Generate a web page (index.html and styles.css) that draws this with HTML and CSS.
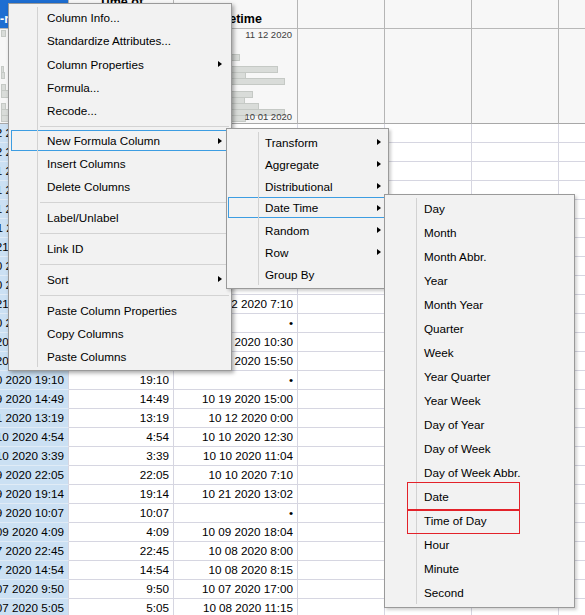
FILE: index.html
```html
<!DOCTYPE html>
<html>
<head>
<meta charset="utf-8">
<link rel="stylesheet" href="styles.css">
</head>
<body>
<div class="table">
  <div class="row">
    <div class="h c1 sel"><span class="clipname">Date-received</span></div>
    <div class="h c2"><span>Time of</span><span>Day</span></div>
    <div class="h c3"><span>Datetime</span></div>
    <div class="h c4"></div><div class="h c5"></div><div class="h c6"></div><div class="h c7"></div>
  </div>
  <div class="row">
    <div class="s c1">
      <div class="hist h1">
        <div class="bar" style="width:5px"></div><div class="gap"></div><div class="gap"></div><div class="gap"></div><div class="gap"></div><div class="gap"></div>
        <div class="bar" style="width:3px"></div><div class="bar" style="width:4px"></div><div class="gap"></div>
        <div class="bar" style="width:5px"></div><div class="bar" style="width:14px"></div><div class="gap"></div>
        <div class="bar" style="width:5px"></div><div class="bar" style="width:12px"></div><div class="bar" style="width:24px"></div>
      </div>
    </div>
    <div class="s c2"></div>
    <div class="s c3">
      <div class="hist h3">
        <div class="bar" style="width:40px"></div>
        <div class="bar" style="width:65px"></div>
        <div class="bar" style="width:30px"></div>
        <div class="bar" style="width:103px"></div>
        <div class="bar" style="width:71px"></div>
        <div class="bar" style="width:110px"></div>
        <div class="bar" style="width:45px"></div>
        <div class="bar" style="width:78px"></div>
        <div class="bar" style="width:70px"></div>
        <div class="bar" style="width:84px"></div>
        <div class="bar" style="width:110px"></div>
        <div class="bar" style="width:71px"></div>
      </div>
      <div class="lbl top">11 12 2020</div>
      <div class="lbl bot">10 01 2020</div>
    </div>
    <div class="s c4"></div><div class="s c5"></div><div class="s c6"></div><div class="s c7"></div>
  </div>

  <div class="row"><div class="c c1">10 22 2020 20:10</div><div class="c c2">20:10</div><div class="c c3">10 23 2020 9:00</div><div class="c c4"></div><div class="c c5"></div><div class="c c6"></div><div class="c c7"></div></div>
  <div class="row"><div class="c c1">10 22 2020 16:32</div><div class="c c2">16:32</div><div class="c c3">10 22 2020 18:00</div><div class="c c4"></div><div class="c c5"></div><div class="c c6"></div><div class="c c7"></div></div>
  <div class="row"><div class="c c1">10 21 2020 23:48</div><div class="c c2">23:48</div><div class="c c3">10 22 2020 8:30</div><div class="c c4"></div><div class="c c5"></div><div class="c c6"></div><div class="c c7"></div></div>
  <div class="row"><div class="c c1">10 21 2020 21:17</div><div class="c c2">21:17</div><div class="c c3">•</div><div class="c c4"></div><div class="c c5"></div><div class="c c6"></div><div class="c c7"></div></div>
  <div class="row"><div class="c c1">10 21 2020 15:03</div><div class="c c2">15:03</div><div class="c c3">10 21 2020 16:45</div><div class="c c4"></div><div class="c c5"></div><div class="c c6"></div><div class="c c7"></div></div>
  <div class="row"><div class="c c1">10 21 2020 11:26</div><div class="c c2">11:26</div><div class="c c3">10 21 2020 14:00</div><div class="c c4"></div><div class="c c5"></div><div class="c c6"></div><div class="c c7"></div></div>
  <div class="row"><div class="c c1">10 21 2020 8:41</div><div class="c c2">8:41</div><div class="c c3">10 21 2020 9:15</div><div class="c c4"></div><div class="c c5"></div><div class="c c6"></div><div class="c c7"></div></div>
  <div class="row"><div class="c c1">10 20 2020 23:02</div><div class="c c2">23:02</div><div class="c c3">10 21 2020 8:00</div><div class="c c4"></div><div class="c c5"></div><div class="c c6"></div><div class="c c7"></div></div>
  <div class="row"><div class="c c1">10 20 2020 21:37</div><div class="c c2">21:37</div><div class="c c3">10 21 2020 10:20</div><div class="c c4"></div><div class="c c5"></div><div class="c c6"></div><div class="c c7"></div></div>
  <div class="row"><div class="c c1">10 21 2020 1:55</div><div class="c c2">1:55</div><div class="c c3">10 22 2020 7:10</div><div class="c c4"></div><div class="c c5"></div><div class="c c6"></div><div class="c c7"></div></div>
  <div class="row"><div class="c c1">10 20 2020 20:44</div><div class="c c2">20:44</div><div class="c c3">•</div><div class="c c4"></div><div class="c c5"></div><div class="c c6"></div><div class="c c7"></div></div>
  <div class="row"><div class="c c1">10 20 2020 6:18</div><div class="c c2">6:18</div><div class="c c3">10 20 2020 10:30</div><div class="c c4"></div><div class="c c5"></div><div class="c c6"></div><div class="c c7"></div></div>
  <div class="row"><div class="c c1">10 20 2020 2:27</div><div class="c c2">2:27</div><div class="c c3">10 20 2020 15:50</div><div class="c c4"></div><div class="c c5"></div><div class="c c6"></div><div class="c c7"></div></div>
  <div class="row"><div class="c c1">10 20 2020 19:10</div><div class="c c2">19:10</div><div class="c c3">•</div><div class="c c4"></div><div class="c c5"></div><div class="c c6"></div><div class="c c7"></div></div>
  <div class="row"><div class="c c1">10 19 2020 14:49</div><div class="c c2">14:49</div><div class="c c3">10 19 2020 15:00</div><div class="c c4"></div><div class="c c5"></div><div class="c c6"></div><div class="c c7"></div></div>
  <div class="row"><div class="c c1">10 11 2020 13:19</div><div class="c c2">13:19</div><div class="c c3">10 12 2020 0:00</div><div class="c c4"></div><div class="c c5"></div><div class="c c6"></div><div class="c c7"></div></div>
  <div class="row"><div class="c c1">10 10 2020 4:54</div><div class="c c2">4:54</div><div class="c c3">10 10 2020 12:30</div><div class="c c4"></div><div class="c c5"></div><div class="c c6"></div><div class="c c7"></div></div>
  <div class="row"><div class="c c1">10 10 2020 3:39</div><div class="c c2">3:39</div><div class="c c3">10 10 2020 11:04</div><div class="c c4"></div><div class="c c5"></div><div class="c c6"></div><div class="c c7"></div></div>
  <div class="row"><div class="c c1">10 09 2020 22:05</div><div class="c c2">22:05</div><div class="c c3">10 10 2020 7:10</div><div class="c c4"></div><div class="c c5"></div><div class="c c6"></div><div class="c c7"></div></div>
  <div class="row"><div class="c c1">10 09 2020 19:14</div><div class="c c2">19:14</div><div class="c c3">10 21 2020 13:02</div><div class="c c4"></div><div class="c c5"></div><div class="c c6"></div><div class="c c7"></div></div>
  <div class="row"><div class="c c1">10 09 2020 10:07</div><div class="c c2">10:07</div><div class="c c3">•</div><div class="c c4"></div><div class="c c5"></div><div class="c c6"></div><div class="c c7"></div></div>
  <div class="row"><div class="c c1">10 09 2020 4:09</div><div class="c c2">4:09</div><div class="c c3">10 09 2020 18:04</div><div class="c c4"></div><div class="c c5"></div><div class="c c6"></div><div class="c c7"></div></div>
  <div class="row"><div class="c c1">10 07 2020 22:45</div><div class="c c2">22:45</div><div class="c c3">10 08 2020 8:00</div><div class="c c4"></div><div class="c c5"></div><div class="c c6"></div><div class="c c7"></div></div>
  <div class="row"><div class="c c1">10 07 2020 14:54</div><div class="c c2">14:54</div><div class="c c3">10 08 2020 8:15</div><div class="c c4"></div><div class="c c5"></div><div class="c c6"></div><div class="c c7"></div></div>
  <div class="row"><div class="c c1">10 07 2020 9:50</div><div class="c c2">9:50</div><div class="c c3">10 07 2020 17:00</div><div class="c c4"></div><div class="c c5"></div><div class="c c6"></div><div class="c c7"></div></div>
  <div class="row"><div class="c c1">10 07 2020 5:05</div><div class="c c2">5:05</div><div class="c c3">10 08 2020 11:15</div><div class="c c4"></div><div class="c c5"></div><div class="c c6"></div><div class="c c7"></div></div>
</div>

<div class="menu m1">
  <div class="mi">Column Info...</div>
  <div class="mi">Standardize Attributes...</div>
  <div class="mi">Column Properties<span class="arr"></span></div>
  <div class="mi">Formula...</div>
  <div class="mi">Recode...</div>
  <div class="sep"></div>
  <div class="mi hl">New Formula Column<span class="arr"></span></div>
  <div class="mi">Insert Columns</div>
  <div class="mi">Delete Columns</div>
  <div class="sep"></div>
  <div class="mi">Label/Unlabel</div>
  <div class="sep"></div>
  <div class="mi">Link ID</div>
  <div class="sep"></div>
  <div class="mi">Sort<span class="arr"></span></div>
  <div class="sep"></div>
  <div class="mi">Paste Column Properties</div>
  <div class="mi">Copy Columns</div>
  <div class="mi">Paste Columns</div>
</div>

<div class="menu m2">
  <div class="mi">Transform<span class="arr"></span></div>
  <div class="mi">Aggregate<span class="arr"></span></div>
  <div class="mi">Distributional<span class="arr"></span></div>
  <div class="mi hl">Date Time<span class="arr"></span></div>
  <div class="mi">Random<span class="arr"></span></div>
  <div class="mi">Row<span class="arr"></span></div>
  <div class="mi">Group By</div>
</div>

<div class="menu m3">
  <div class="mi">Day</div>
  <div class="mi">Month</div>
  <div class="mi">Month Abbr.</div>
  <div class="mi">Year</div>
  <div class="mi">Month Year</div>
  <div class="mi">Quarter</div>
  <div class="mi">Week</div>
  <div class="mi">Year Quarter</div>
  <div class="mi">Year Week</div>
  <div class="mi">Day of Year</div>
  <div class="mi">Day of Week</div>
  <div class="mi">Day of Week Abbr.</div>
  <div class="mi">Date</div>
  <div class="mi">Time of Day</div>
  <div class="mi">Hour</div>
  <div class="mi">Minute</div>
  <div class="mi">Second</div>
</div>

<div class="mark mark-date"></div>
<div class="mark mark-time"></div>
</body>
</html>
```

FILE: styles.css
```css
html, body {
  margin: 0;
  padding: 0;
}
body {
  width: 585px;
  height: 615px;
  overflow: hidden;
  position: relative;
  background: #ffffff;
  font-family: "Liberation Sans", Arial, sans-serif;
  color: #000;
}

/* ---------- data table ---------- */
.table {
  display: flex;
  flex-direction: column;
  font-size: 11.7px;
}
.row {
  display: flex;
  flex: none;
}
.row > div {
  box-sizing: border-box;
  flex: none;
  overflow: hidden;
  white-space: nowrap;
}
.c1 { width: 69px; }
.c2 { width: 105px; }
.c3 { width: 124px; }
.c4, .c5, .c6, .c7 { width: 87px; }

/* header */
.h {
  height: 29px;
  background: #f7f7f7;
  border-right: 1px solid #b5b5b5;
  border-bottom: 1px solid #b8b8b8;
  display: flex;
  flex-direction: column;
  justify-content: flex-end;
  align-items: center;
  font-weight: bold;
  font-size: 12.5px;
  line-height: 17px;
}
.h.sel {
  background: #1e6ed2;
  color: #ffffff;
  align-items: flex-start;
}
.clipname {
  margin-left: -27px;
}

/* summary (histograms) */
.s {
  height: 95px;
  background: #f7f7f7;
  border-right: 1px solid #b5b5b5;
  border-bottom: 1px solid #a8a8a8;
  position: relative;
}
.hist {
  display: flex;
  flex-direction: column;
  align-items: flex-start;
  padding-left: 1px;
}
.hist.h1 { padding-top: 0.5px; }
.hist.h3 { padding-top: 18.9px; }
.bar {
  box-sizing: border-box;
  height: 7.1px;
  margin-bottom: -1px;
  background: #d9dcd9;
  border: 1px solid #c5c9c5;
}
.gap {
  height: 6.1px;
}
.lbl {
  position: absolute;
  right: 5px;
  font-size: 9.5px;
  color: #404040;
  line-height: 11px;
}
.lbl.top { top: 0px; }
.lbl.bot { bottom: 1px; }

/* cells */
.c {
  height: 19px;
  border-right: 1px solid #d6d6e1;
  border-bottom: 1px solid #d6d6e1;
  display: flex;
  justify-content: flex-end;
  align-items: center;
  padding-right: 4px;
  line-height: 18px;
}
.c.c1 {
  background: #cbe0f3;
  border-bottom-color: #e0ebf6;
}

/* ---------- menus ---------- */
.menu {
  position: absolute;
  background: #f2f2f2;
  border: 1px solid #9a9a9a;
  font-size: 11.7px;
  color: #000;
}
.menu::before {
  content: "";
  position: absolute;
  top: 3px;
  bottom: 3px;
  left: var(--gx);
  width: 1px;
  background: #d2d2d2;
}
.mi {
  box-sizing: border-box;
  display: flex;
  align-items: center;
  height: var(--ih);
  padding-left: var(--pl);
  padding-right: var(--pr);
  white-space: nowrap;
}
.arr {
  margin-left: auto;
  width: 0;
  height: 0;
  border-left: 4px solid #000;
  border-top: 3.5px solid transparent;
  border-bottom: 3.5px solid transparent;
}
.mi.hl {
  height: 21px;
  border: 1px solid #3d9de2;
  margin: var(--ht) 2px var(--hb) var(--hl);
  padding-left: calc(var(--pl) - var(--hl) - 1px);
  padding-right: calc(var(--pr) - 3px);
}
.sep {
  height: 1px;
  background: #d3d3d3;
  margin: 4px 2px 2.6px 31px;
}

.m1 {
  left: 8px;
  top: 3px;
  width: 222px;
  padding: 2px 0 1px;
  --gx: 28px;
  --ih: 23.3px;
  --pl: 38px;
  --pr: 9px;
  --ht: 1.5px;
  --hb: 0.8px;
  --hl: 2px;
  box-shadow: 2px 2px 4px rgba(0, 0, 0, 0.34);
}
.m2 {
  left: 226px;
  top: 128px;
  width: 161px;
  padding: 2px 0 3px;
  --gx: 31px;
  --ih: 22px;
  --pl: 38px;
  --pr: 7px;
  --ht: 0px;
  --hb: 1px;
  --hl: 1px;
  box-shadow: 2px 2px 3px rgba(0, 0, 0, 0.2);
}
.m3 {
  left: 384px;
  top: 194px;
  width: 189px;
  padding: 1px 0 3px;
  --gx: 31px;
  --ih: 24px;
  --pl: 39px;
  --pr: 7px;
  box-shadow: 2px 2px 3px rgba(0, 0, 0, 0.18);
}

/* red annotation boxes */
.mark {
  position: absolute;
  box-sizing: border-box;
  border: 1px solid #e3222a;
}
.mark-date {
  left: 407px;
  top: 482px;
  width: 113px;
  height: 28px;
}
.mark-time {
  left: 407px;
  top: 510px;
  width: 113px;
  height: 24px;
}
```
